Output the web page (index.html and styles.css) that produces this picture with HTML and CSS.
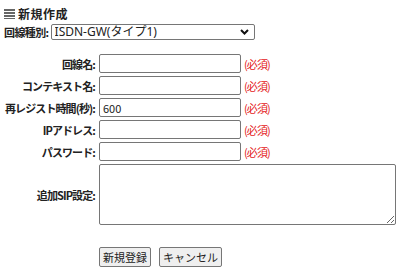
FILE: index.html
```html
<!DOCTYPE html>
<html lang="ja">
<head>
    <meta charset="UTF-8">
    <title>新規作成</title>
    <link rel="stylesheet" href="styles.css">
</head>
<body>
    <h1 class="title"><span class="title-icon"></span>新規作成</h1>
    <div class="type-row">
        <label class="type-label">回線種別:</label>
        <div class="select-wrap">
            <select class="type-select">
                <option>ISDN-GW(タイプ1)</option>
            </select>
            <svg class="chevron" width="9" height="6" viewBox="0 0 9 6"><path d="M1 1l3.5 3.5L8 1" fill="none" stroke="#111" stroke-width="2"/></svg>
        </div>
    </div>
    <div class="form">
        <label class="label">回線名:</label>
        <div class="cell"><input type="text" class="field"><span class="req">(必須)</span></div>

        <label class="label">コンテキスト名:</label>
        <div class="cell"><input type="text" class="field"><span class="req">(必須)</span></div>

        <label class="label">再レジスト時間(秒):</label>
        <div class="cell"><input type="text" class="field" value="600"><span class="req">(必須)</span></div>

        <label class="label">IPアドレス:</label>
        <div class="cell"><input type="text" class="field"><span class="req">(必須)</span></div>

        <label class="label">パスワード:</label>
        <div class="cell"><input type="password" class="field"><span class="req">(必須)</span></div>

        <label class="label">追加SIP設定:</label>
        <div class="cell"><textarea class="sip"></textarea></div>
    </div>
    <div class="buttons">
        <button class="btn">新規登録</button>
        <button class="btn">キャンセル</button>
    </div>
</body>
</html>
```

FILE: styles.css
```css
* { box-sizing: border-box; }
body { margin: 0; padding: 5px 4px; font-family: "Noto Sans CJK JP", "Noto Sans", sans-serif; font-size: 11px; line-height: 16px; color: #222; background: #fff; }
.title { display: flex; align-items: center; gap: 3px; height: 17px; margin: 0 0 2px; font-size: 12px; font-weight: bold; letter-spacing: 0.5px; }
.title-icon { width: 11px; height: 10px; background: repeating-linear-gradient(#666 0 2px, #fff 2px 3px); }
.type-row { display: flex; align-items: center; gap: 2px; }
.type-label { font-weight: bold; letter-spacing: -0.6px; }
.select-wrap { position: relative; width: 204px; height: 16px; }
.type-select { appearance: none; display: block; width: 100%; height: 100%; margin: 0; padding: 0 0 0 3px; font-family: "Noto Sans", "Noto Sans CJK JP", sans-serif; font-size: 12px; line-height: 14px; border: 1px solid #767676; border-radius: 2px; background: #fff; color: #222; }
.chevron { position: absolute; right: 6px; top: 5px; pointer-events: none; }
.form { display: grid; grid-template-columns: 91px auto; column-gap: 4px; row-gap: 3px; margin-top: 14px; }
.label { display: flex; align-items: center; justify-content: flex-end; font-weight: bold; white-space: nowrap; letter-spacing: -0.9px; }
.cell { display: flex; align-items: center; gap: 3px; }
.field { width: 142px; height: 19px; padding: 0 3px; font-family: inherit; font-size: 11px; border: 1px solid #767676; border-radius: 2px; color: #222; }
.req { color: #e42020; font-size: 11px; letter-spacing: -0.9px; }
.sip { width: 297px; height: 61px; border: 1px solid #767676; border-radius: 2px; resize: vertical; }
.buttons { display: flex; gap: 8px; padding: 22px 0 0 95px; }
.btn { height: 20px; padding: 0 3px; font-family: inherit; font-size: 11px; line-height: 16px; color: #222; border: 1px solid #767676; border-radius: 2px; background: #efefef; }
```
